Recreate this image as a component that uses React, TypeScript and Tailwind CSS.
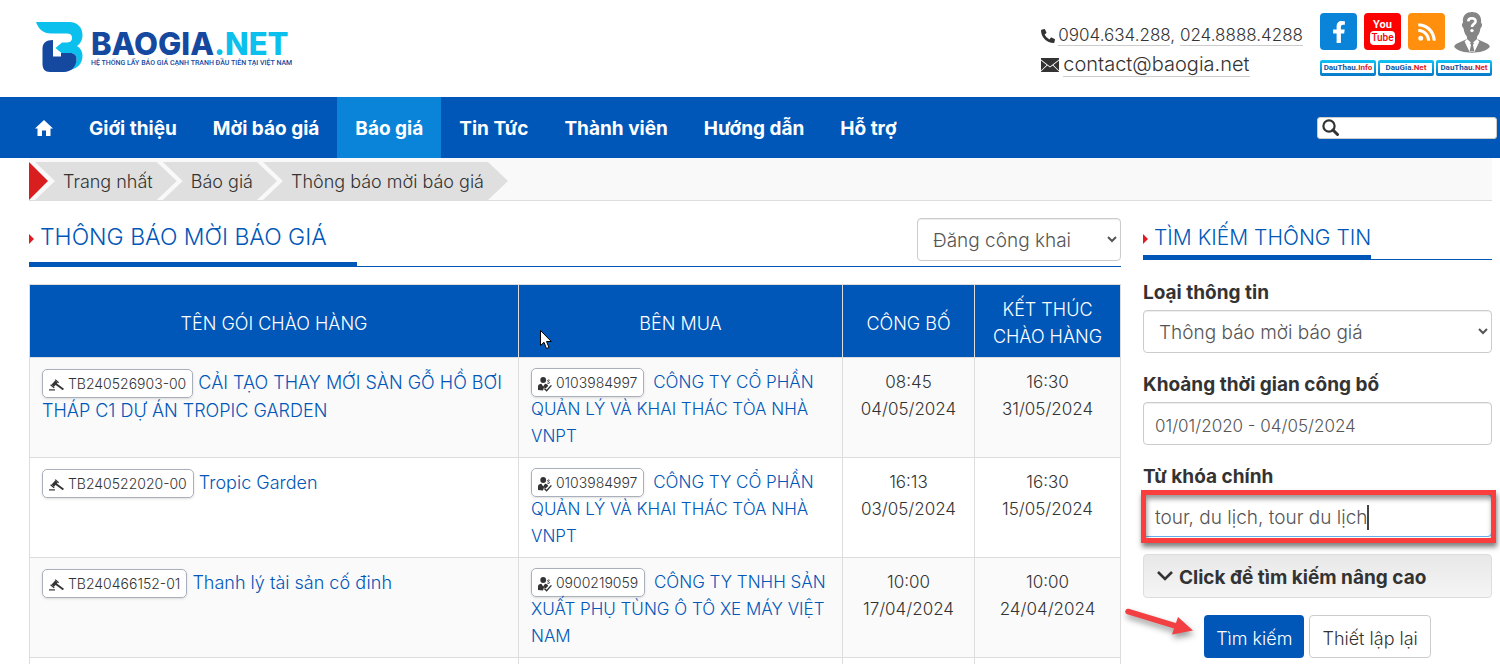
import type { ReactNode } from 'react'
import { FaFacebookF, FaPhoneAlt, FaRss } from 'react-icons/fa'
import { clsx } from 'clsx'

type Tender = {
  code: string
  name: string
  taxCode: string
  buyer: string
  published: [string, string]
  closed: [string, string]
}

const tenders: Tender[] = [
  {
    code: 'TB240526903-00',
    name: 'CẢI TẠO THAY MỚI SÀN GỖ HỒ BƠI THÁP C1 DỰ ÁN TROPIC GARDEN',
    taxCode: '0103984997',
    buyer: 'CÔNG TY CỔ PHẦN QUẢN LÝ VÀ KHAI THÁC TÒA NHÀ VNPT',
    published: ['08:45', '04/05/2024'],
    closed: ['16:30', '31/05/2024'],
  },
  {
    code: 'TB240522020-00',
    name: 'Tropic Garden',
    taxCode: '0103984997',
    buyer: 'CÔNG TY CỔ PHẦN QUẢN LÝ VÀ KHAI THÁC TÒA NHÀ VNPT',
    published: ['16:13', '03/05/2024'],
    closed: ['16:30', '15/05/2024'],
  },
  {
    code: 'TB240466152-01',
    name: 'Thanh lý tài sản cố đinh',
    taxCode: '0900219059',
    buyer: 'CÔNG TY TNHH SẢN XUẤT PHỤ TÙNG Ô TÔ XE MÁY VIỆT NAM',
    published: ['10:00', '17/04/2024'],
    closed: ['10:00', '24/04/2024'],
  },
]

const menu = ['Giới thiệu', 'Mời báo giá', 'Báo giá', 'Tin Tức', 'Thành viên', 'Hướng dẫn', 'Hỗ trợ']
const crumbs = ['Trang nhất', 'Báo giá', 'Thông báo mời báo giá']

const HomeIcon = () => (
  <svg width="18" height="16" viewBox="0 0 18 16" fill="currentColor">
    <path d="M9 0 18 8.5H15.5V16H11V10.5H7V16H2.5V8.5H0Z" />
  </svg>
)

const EnvelopeIcon = () => (
  <svg width="18" height="14" viewBox="0 0 18 14" fill="currentColor">
    <path d="M0 0H18V1.4L9 8.400 0 1.4Z" />
    <path d="M0 2.600 5.600 7 0 12.600ZM18 2.600V12.600L12.400 7ZM6.300 7.600 9 9.600 11.700 7.600 18 13.400V14H0V13.400Z" />
  </svg>
)

const SearchIcon = () => (
  <svg width="17" height="17" viewBox="0 0 17 17" fill="none" stroke="#333">
    <circle cx="7" cy="7" r="5.6" strokeWidth="2.2" />
    <path d="M11 11 15.5 15.5" strokeWidth="3" strokeLinecap="round" />
  </svg>
)

const GavelIcon = () => (
  <svg width="15" height="12" viewBox="0 0 15 12" className="inline-block" fill="none" stroke="#333">
    <path d="M0 10.900H6" strokeWidth="1.200" />
    <path d="M3.800 6.600 7.400 2.600" strokeWidth="3.200" />
    <path d="M1.600 5.700 5.200 8.800M6.200.6 9.600 3.800" strokeWidth="1.300" />
    <path d="M6.600 4.800 14.400 10.400" strokeWidth="1.900" />
  </svg>
)

const BuyerIcon = () => (
  <svg width="14" height="15" viewBox="0 0 14 15" className="inline-block" fill="#333">
    <circle cx="5.2" cy="3" r="2.9" />
    <path d="M0 13V9.4C0 7.8 1.6 7 3.4 6.8L5.2 9.4 7 6.8C8.8 7 10 7.8 10.2 9L7.6 11.6 6 10.6 5 13.6Z" />
    <path d="M6.4 11.6 8.6 13.8 13.4 8.4" fill="none" stroke="#333" strokeWidth="1.4" />
    <path d="M11.6 3.4C10.6 2.6 9.4 3 9.6 4 9.8 4.9 11.6 4.7 11.5 5.8 11.3 6.7 9.9 6.6 9.3 6" fill="none" stroke="#333" />
  </svg>
)

const UserIcon = () => (
  <svg width="36" height="41" viewBox="0 0 36 41">
    <path
      d="M18 0C24 0 28 4 27 11 28.5 11 28.4 15 26.4 16.4 26 21 24 23.4 23 24.4V27L33 31.5C35 32.4 35.5 33.5 35.8 35 30 42.6 6 42.6 .2 35 .5 33.5 1 32.4 3 31.5L13 27V24.4C12 23.4 10 21 9.6 16.4 7.6 15 7.5 11 9 11 8 4 12 0 18 0Z"
      fill="#858585"
    />
    <path d="M13 27 10.6 29.6 15.6 40H20.4L25.4 29.6 23 27 18 31.6Z" fill="#fff" />
    <path d="M16 31 18 30 20 31 19 33 20.4 39.6H15.6L17 33Z" fill="#858585" />
    <path d="M14.2 9.4C14.4 5.2 21.8 5.4 21.6 9.4 21.5 12 18 11.8 18 15" fill="none" stroke="#fff" strokeWidth="2.6" />
    <circle cx="18" cy="18.6" r="1.7" fill="#fff" />
  </svg>
)

const Logo = () => (
  <a href="#" className="flex items-center gap-2">
    <svg width="47" height="50" viewBox="0 0 47 50">
      <path
        d="M0 0H33C42 0 46.500 6 46.500 13 46.500 18 44.500 21.500 41 24 45 26.500 46.500 30 46.500 34 46.500 42 41 46.500 34 48 38 45 40.500 41 40.500 37 40.500 33.500 38 31 34 31H25.500L19.500 26 26 20.500H31C35 20.500 36.500 17.500 36 15 35.500 12.500 34 11.500 31 11.500H15C7 11.500 3 7.500 0 0Z"
        fill="#0cc0ee"
      />
      <path
        d="M17 18V34.500H25V31H34C38 31 41 33.500 40.500 38 40 45 35 50 28 50H14C9 50 6.500 47 6.500 42V27C6.500 21 10 18 17 18Z"
        fill="#15489f"
      />
    </svg>
    <span className="flex flex-col pt-1">
      <span className="text-[31px] leading-[28px] font-extrabold text-[#15489f]">
        BAOGIA<span className="text-[#0cc0ee]">.NET</span>
      </span>
      <span className="font-['Roboto',sans-serif] text-[7px] leading-[10px] font-medium whitespace-nowrap text-[#15489f]">
        HỆ THỐNG LẤY BÁO GIÁ CẠNH TRANH ĐẦU TIÊN TẠI VIỆT NAM
      </span>
    </span>
  </a>
)

const PartnerBadge = ({ name, suffix }: { name: string; suffix: string }) => (
  <a href="#" className="flex h-4 w-14 rounded-xs bg-linear-to-b from-[#12c4f4] to-[#0a78c8] px-[2px] py-[3px]">
    <span className="flex flex-1 items-center justify-center bg-white font-['Roboto',sans-serif] text-[8px] leading-none font-bold text-[#14559c]">
      {name}
      <span className="text-[#e01b22]">{suffix}</span>
    </span>
  </a>
)

const Header = () => (
  <header className="flex h-[97px] items-start justify-between pr-2 pl-9">
    <div className="pt-[22px]">
      <Logo />
    </div>
    <div className="flex gap-[17px]">
      <address className="flex flex-col pt-[22px] font-light not-italic">
        <p className="flex items-center gap-[3px] text-[17px] leading-[27px]">
          <FaPhoneAlt size={14} />
          <span>
            <a href="#" className="border-b border-[#ccc]">0904.634.288</a>,{' '}
            <a href="#" className="border-b border-[#ccc]">024.8888.4288</a>
          </span>
        </p>
        <p className="flex items-center gap-1 pt-1 text-xl leading-[27px]">
          <EnvelopeIcon />
          <a href="#" className="border-b border-[#ccc] leading-[23px]">contact@baogia.net</a>
        </p>
      </address>
      <div className="pt-3">
        <div className="flex items-start gap-[7px]">
          <a href="#" aria-label="Facebook" className="mt-px flex size-[37px] items-center justify-center rounded bg-[#0a84d8] text-white">
            <FaFacebookF size={22} />
          </a>
          <a href="#" aria-label="Youtube" className="mt-px flex size-[37px] flex-col items-center justify-center rounded bg-[#fd0000] font-['Roboto',sans-serif] text-[11px] leading-[12px] font-bold text-white">
            <span>You</span>
            <span className="rounded bg-white px-px text-[10px] leading-[14px] font-medium text-[#fd0000]">Tube</span>
          </a>
          <a href="#" aria-label="RSS" className="mt-px flex size-[37px] items-center justify-center rounded bg-[#ff8f0c] text-white">
            <FaRss size={20} />
          </a>
          <a href="#" aria-label="Tài khoản" className="pl-[2px]">
            <UserIcon />
          </a>
        </div>
        <div className="mt-[7px] flex gap-[2px]">
          <PartnerBadge name="DauThau" suffix=".Info" />
          <PartnerBadge name="DauGia" suffix=".Net" />
          <PartnerBadge name="DauThau" suffix=".Net" />
        </div>
      </div>
    </div>
  </header>
)

const Nav = () => (
  <nav className="flex h-[61px] items-center justify-between bg-[#0057b8] pr-[3px] pl-[17px] text-white">
    <ul className="flex h-full">
      <li>
        <a href="#" aria-label="Trang nhất" className="flex h-full items-center px-[18px]">
          <HomeIcon />
        </a>
      </li>
      {menu.map((item) => (
        <li key={item}>
          <a
            href="#"
            className={clsx('flex h-full items-center px-[18px] pt-1 text-[19px] font-bold', item === 'Báo giá' && 'bg-[#0a84d8]')}
          >
            {item}
          </a>
        </li>
      ))}
    </ul>
    <label className="flex h-[22px] w-[180px] items-center rounded-[3px] border border-[#ccc] bg-white pl-1">
      <SearchIcon />
      <input type="text" aria-label="Tìm kiếm" className="min-w-0 flex-1 px-1 text-sm text-[#333] outline-none" />
    </label>
  </nav>
)

const Breadcrumb = () => (
  <nav className="flex border-b border-[#ddd] bg-[#f9f9f9] pt-1">
    <span className="h-[38px] w-[19px] bg-[#d81e1e] [clip-path:polygon(0_0,100%_50%,0_100%)]" />
    <ol className="ml-[1px] flex">
      {crumbs.map((crumb) => (
        <li
          key={crumb}
          className="-ml-[14px] h-[38px] bg-[#dfdfdf] pr-6 pl-7 [clip-path:polygon(0_0,calc(100%_-_20px)_0,100%_50%,calc(100%_-_20px)_100%,0_100%,20px_50%)]"
        >
          <a href="#" className="text-lg leading-[39px] font-light">
            {crumb}
          </a>
        </li>
      ))}
    </ol>
  </nav>
)

const Title = ({ children, className }: { children: ReactNode; className?: string }) => (
  <h2 className={clsx('-mb-px flex items-center gap-1.5 border-b-[5px] border-[#0057b8] leading-[27px] font-light whitespace-nowrap text-[#0057b8]', className)}>
    <span className="mt-0.5 border-y-[5px] border-l-[5px] border-y-transparent border-l-[#e01b22]" />
    {children}
  </h2>
)

const Tag = ({ icon, children }: { icon: ReactNode; children: ReactNode }) => (
  <span className="rounded-[5px] border border-[#a9afbb] bg-white px-1.5 py-[5px] text-sm whitespace-nowrap text-[#333] shadow-sm">
    {icon} {children}
  </span>
)

const TenderTable = () => (
  <table className="mt-[17px] w-full table-fixed border-collapse text-[17px] leading-[27px] font-light [&_td]:border [&_td]:border-[#ddd] [&_th]:border [&_th]:border-[#ddd] [&_th]:pt-1 [&_th]:text-lg [&_th]:leading-[27px] [&_th]:font-light">
    <colgroup>
      <col />
      <col className="w-[324px]" />
      <col className="w-[132px]" />
      <col className="w-[146px]" />
    </colgroup>
    <thead className="bg-[#0057b8] text-white">
      <tr className="h-[73px]">
        <th>TÊN GÓI CHÀO HÀNG</th>
        <th>BÊN MUA</th>
        <th>CÔNG BỐ</th>
        <th>
          KẾT THÚC
          <br />
          CHÀO HÀNG
        </th>
      </tr>
    </thead>
    <tbody>
      {tenders.map((tender) => (
        <tr key={tender.code} className="h-[100px] align-top odd:bg-[#fafafa] [&>td]:px-3 [&>td]:pt-[11px] [&>td]:pb-[7px]">
          <td>
            <a href="#" className="text-lg leading-[27px] text-[#0057b8]">
              <Tag icon={<GavelIcon />}>{tender.code}</Tag> {tender.name}
            </a>
          </td>
          <td>
            <a href="#" className="text-[#0057b8]">
              <Tag icon={<BuyerIcon />}>{tender.taxCode}</Tag>{' '}
              <span className="pl-1">{tender.buyer}</span>
            </a>
          </td>
          <td className="text-center">
            {tender.published[0]}
            <br />
            {tender.published[1]}
          </td>
          <td className="text-center">
            {tender.closed[0]}
            <br />
            {tender.closed[1]}
          </td>
        </tr>
      ))}
      <tr className="h-[100px]">
        <td />
        <td />
        <td />
        <td />
      </tr>
    </tbody>
  </table>
)

const control = 'h-[43px] w-full rounded border border-[#ccc] bg-white font-light text-[#555] shadow-[inset_0_1px_1px_rgba(0,0,0,0.075)] outline-none'

const SearchForm = () => (
  <form className="mt-5 flex flex-col" onSubmit={(e) => e.preventDefault()}>
    <label htmlFor="kind" className="mb-1 text-[19px] leading-[26px] font-bold">
      Loại thông tin
    </label>
    <select id="kind" className={clsx(control, 'px-[11px] pt-0.5 text-[19px]')}>
      <option>Thông báo mời báo giá</option>
    </select>
    <label htmlFor="range" className="mt-[19px] mb-1 text-[19px] leading-[26px] font-bold">
      Khoảng thời gian công bố
    </label>
    <input id="range" type="text" defaultValue="01/01/2020 - 04/05/2024" className={clsx(control, 'px-[11px] pt-1 text-[17px]')} />
    <label htmlFor="keyword" className="mt-[19px] mb-1 text-[19px] leading-[26px] font-bold">
      Từ khóa chính
    </label>
    <div className="relative">
      <div className="flex h-[43px] items-center rounded border border-[#66afe9] bg-white pt-1 pl-[11px]">
        <input
          id="keyword"
          type="text"
          defaultValue="tour, du lịch, tour du lịch"
          className="field-sizing-content border-r-2 border-[#444] text-[19px] leading-[25px] font-light text-[#555] outline-none"
        />
      </div>
      {/* highlight box drawn over the keyword field */}
      <div className="pointer-events-none absolute -top-1 -right-1 -bottom-[6px] -left-[2px] border-[5px] border-[#fa3e3e] shadow-[1px_4px_5px_rgba(0,0,0,0.5),inset_1px_4px_5px_rgba(0,0,0,0.4)]" />
    </div>
    <button
      type="button"
      className="mt-[17px] flex h-11 items-center gap-1.5 rounded border border-[#ddd] bg-linear-to-b from-[#e8e8e8] to-[#f5f5f5] px-[13px] pt-1 text-[19px] font-bold"
    >
      <svg width="16" height="10" viewBox="0 0 16 10" className="mb-1" fill="none" stroke="#333" strokeWidth="2.600">
        <path d="M1 1 8 8 15 1" />
      </svg>
      Click để tìm kiếm nâng cao
    </button>
    <div className="relative mt-[17px] flex justify-center gap-[5px] text-lg font-light">
      <button type="submit" className="h-[43px] rounded bg-[#0057b8] px-3 pt-1 text-white">
        Tìm kiếm
      </button>
      <button type="reset" className="h-[43px] rounded border border-[#ccc] bg-white px-3 pt-1">
        Thiết lập lại
      </button>
      <svg className="pointer-events-none absolute -top-2 -left-5 drop-shadow-[1px_4px_3px_rgba(0,0,0,0.4)]" width="76" height="34" viewBox="0 0 76 34">
        <path d="M5 4.500 56 20" stroke="#f23f42" strokeWidth="5.500" strokeLinecap="round" />
        <path d="M55 10 70 23.500 49 27.500Z" fill="#f23f42" />
      </svg>
    </div>
  </form>
)

export default function App() {
  return (
    <div className="relative h-screen overflow-hidden bg-white font-['Inter','Noto_Sans',sans-serif] text-[#333]">
      <Header />
      <Nav />
      <div className="pr-2 pl-[29px]">
        <Breadcrumb />
        <div className="grid grid-cols-[minmax(0,1fr)_349px] gap-[22px] pt-[17px]">
          <main>
            <div className="flex h-[49px] items-end justify-between border-b border-[#0057b8]">
              <Title className="pr-[30px] pb-[11px] text-[23px]">THÔNG BÁO MỜI BÁO GIÁ</Title>
              <select aria-label="Hình thức đăng" className={clsx(control, 'mb-[5px] max-w-[204px] px-[11px] pt-0.5 text-[19px]')}>
                <option>Đăng công khai</option>
              </select>
            </div>
            <TenderTable />
          </main>
          <aside>
            <div className="flex h-[42px] items-end border-b border-[#0057b8]">
              <Title className="pb-1 text-[21px]">TÌM KIẾM THÔNG TIN</Title>
            </div>
            <SearchForm />
          </aside>
        </div>
      </div>
      {/* mouse pointer */}
      <svg className="pointer-events-none absolute top-[330px] left-[540px]" width="12" height="20" viewBox="0 0 12 20">
        <path d="M.5.500V15.500L4 12.300 6.500 18.500 9 17.500 6.500 11.500H11.300Z" fill="#fff" stroke="#000" />
      </svg>
    </div>
  )
}
